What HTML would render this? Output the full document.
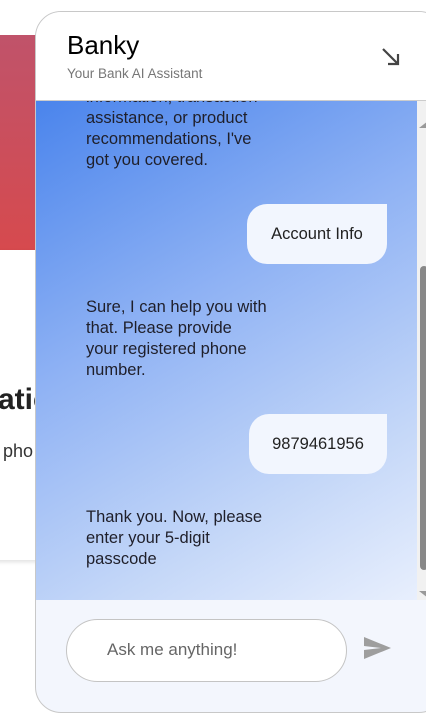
<!DOCTYPE html>
<html><head><meta charset="utf-8"><style>
*{margin:0;padding:0;box-sizing:border-box}
body{width:426px;height:724px;overflow:hidden;background:#fff;font-family:"Liberation Sans",sans-serif;position:relative}
.red{position:absolute;left:0;top:35px;width:40px;height:215px;background:linear-gradient(180deg,#c0536a,#d64a4e)}
.card{position:absolute;left:-10px;top:250px;width:60px;height:310px;background:#fff;box-shadow:0 2px 4px rgba(0,0,0,.12)}
.atic{position:absolute;left:-2px;top:383px;font-size:30px;font-weight:bold;color:#222}
.pho{position:absolute;left:3px;top:441px;font-size:18px;color:#333}
.w{position:absolute;left:35px;top:11px;width:410px;height:702px;border:1px solid #c8c8c8;border-radius:26px;background:#f3f6fd;overflow:hidden}
.hd{position:absolute;left:0;top:0;width:100%;height:89px;background:#fff;border-bottom:1px solid #ccc}
.t{position:absolute;left:31px;top:18px;font-size:26px;color:#000}
.st{position:absolute;left:31px;top:54px;font-size:13.5px;color:#777}
.msgs{position:absolute;left:0;top:89px;width:381px;height:499px;background:linear-gradient(150deg,#4a84ec 0%,#8fb2f4 40%,#c4d7f8 75%,#e8effd 100%);overflow:hidden}
.bot{position:absolute;left:50px;font-size:16.5px;line-height:21px;color:#1f1f2a;white-space:nowrap}
.u{position:absolute;background:#f2f6fe;border-radius:20px 0 20px 20px;font-size:16.5px;color:#222;text-align:center;line-height:60px;height:60px}
.sb{position:absolute;left:381px;top:89px;width:12px;height:499px;background:#f1f1f1}
.th{position:absolute;left:3px;top:165px;width:8px;height:304px;background:#888;border-radius:4px}
.in{position:absolute;left:30px;top:607px;width:281px;height:63px;border:1px solid #c4c4c4;border-radius:32px;background:#fff;font-size:17px;color:#666;padding:20px 0 0 40px}
</style></head><body>
<div class="red"></div><div class="card"></div>
<div class="atic">atic</div><div class="pho">pho</div>
<div class="w">
<div class="hd"><div class="t">Banky</div><div class="st">Your Bank AI Assistant</div>
<svg style="position:absolute;left:344px;top:34px" width="22" height="22" viewBox="0 0 22 22"><path d="M3 3L18 18M8 18H18V8" stroke="#444" stroke-width="2.2" fill="none"/></svg></div>
<div class="msgs">
<div class="bot" style="top:-14px">information, transaction<br>assistance, or product<br>recommendations, I've<br>got you covered.</div>
<div class="u" style="left:211px;top:103px;width:140px">Account Info</div>
<div class="bot" style="top:196px">Sure, I can help you with<br>that. Please provide<br>your registered phone<br>number.</div>
<div class="u" style="left:213px;top:313px;width:138px">9879461956</div>
<div class="bot" style="top:406px">Thank you. Now, please<br>enter your 5-digit<br>passcode</div>
</div>
<div class="sb"><svg style="position:absolute;left:2px;top:20px" width="9" height="7"><path d="M0 7L9 0V7Z" fill="#999"/></svg><div class="th"></div><svg style="position:absolute;left:2px;top:490px" width="9" height="7"><path d="M0 0H9L9 7Z" fill="#999"/></svg></div>
<div class="in">Ask me anything!</div>
<svg style="position:absolute;left:328px;top:625px" width="28" height="22" viewBox="0 0 28 22"><path d="M0 0L27 11L0 22L0 13L17 11L0 9Z" fill="#9e9e9e"/></svg>
</div>
</body></html>
